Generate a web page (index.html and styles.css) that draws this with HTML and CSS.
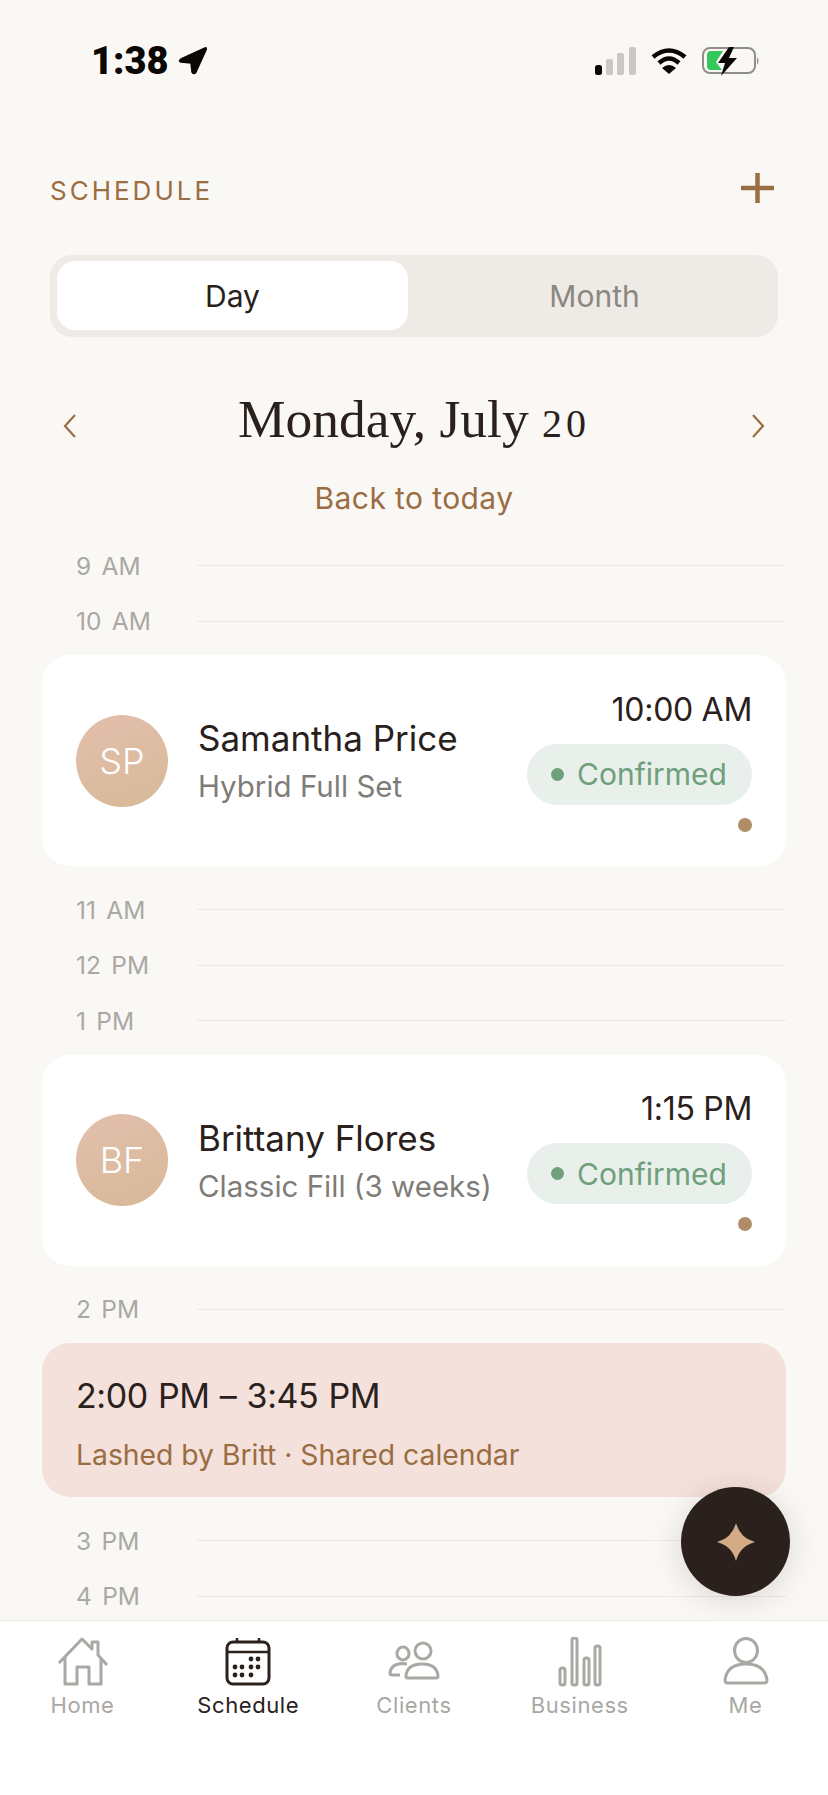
FILE: index.html
```html
<!DOCTYPE html>
<html>
<head>
<meta charset="utf-8">
<title>Schedule</title>
<link rel="stylesheet" href="styles.css">
</head>
<body>
<div class="phone">
	<div class="status">
		<div class="clock">1:38
			<svg class="arrow" width="30" height="30" viewBox="0 0 30 30"><path d="M27 2 L3 13 Q0 15 3 16 L13 17 L14 26 Q16 29 18 26 L28 4 Q29 1 27 2 Z" fill="#0a0705" stroke="#0a0705" stroke-width="1.5" stroke-linejoin="round"/></svg>
		</div>
		<div class="status-icons">
			<svg width="41" height="28" viewBox="0 0 41 28"><rect x="0" y="18" width="7" height="10" rx="2.5" fill="#0a0705"/><rect x="11" y="12" width="7" height="16" rx="2" fill="#c9c8c4"/><rect x="22" y="6" width="7" height="22" rx="2" fill="#c9c8c4"/><rect x="34" y="0" width="7" height="28" rx="2" fill="#c9c8c4"/></svg>
			<svg class="wifi" width="36" height="28" viewBox="0 0 36 28"><path d="M2 10 Q18 -3 34 10" fill="none" stroke="#0a0705" stroke-width="4.5"/><path d="M8 16 Q18 7 28 16" fill="none" stroke="#0a0705" stroke-width="4.5"/><path d="M11 21 L18 27 L25 21 Q18 15 11 21 Z" fill="#0a0705"/></svg>
			<svg class="batt" width="58" height="30" viewBox="0 0 58 30"><rect x="1" y="2" width="52" height="25" rx="7" fill="none" stroke="#8f8e8a" stroke-width="2"/><path d="M9 5 H21 L14 16 L20 24 H9 Q5 24 5 20 V9 Q5 5 9 5 Z" fill="#34c759"/><path d="M27 1 L16 17 H23 L19 30 L35 12 H27 L32 1 Z" fill="#0a0705"/><path d="M55 11 Q58 15 55 19 Z" fill="#8f8e8a"/></svg>
		</div>
	</div>

	<div class="top">
		<span class="eyebrow">SCHEDULE</span>
		<svg class="plus" width="33" height="30" viewBox="0 0 33 30"><path d="M16.5 0 V30 M0 15 H33" stroke="#9a6d42" stroke-width="4.5"/></svg>
	</div>

	<div class="tabs">
		<div class="tab on">Day</div>
		<div class="tab">Month</div>
	</div>

	<div class="date-row">
		<svg class="chev" width="15" height="24" viewBox="0 0 15 24"><path d="M13 1 L3 12 L13 23" fill="none" stroke="#9a6d42" stroke-width="2.2"/></svg>
		<h1>Monday, July <span class="num">20</span></h1>
		<svg class="chev" width="15" height="24" viewBox="0 0 15 24"><path d="M2 1 L12 12 L2 23" fill="none" stroke="#9a6d42" stroke-width="2.2"/></svg>
	</div>
	<div class="back">Back to today</div>

	<div class="agenda">
		<div class="hour"><span>9 AM</span><i></i></div>
		<div class="hour"><span>10 AM</span><i></i></div>
		<div class="card">
			<div class="avatar">SP</div>
			<div class="who">
				<div class="name">Samantha Price</div>
				<div class="service">Hybrid Full Set</div>
			</div>
			<div class="right">
				<div class="time">10:00 AM</div>
				<div class="pill"><b></b>Confirmed</div>
				<div class="dot"></div>
			</div>
		</div>
		<div class="hour first"><span>11 AM</span><i></i></div>
		<div class="hour"><span>12 PM</span><i></i></div>
		<div class="hour"><span>1 PM</span><i></i></div>
		<div class="card">
			<div class="avatar">BF</div>
			<div class="who">
				<div class="name">Brittany Flores</div>
				<div class="service">Classic Fill (3 weeks)</div>
			</div>
			<div class="right">
				<div class="time">1:15 PM</div>
				<div class="pill"><b></b>Confirmed</div>
				<div class="dot"></div>
			</div>
		</div>
		<div class="hour first"><span>2 PM</span><i></i></div>
		<div class="block">
			<div class="block-time">2:00 PM – 3:45 PM</div>
			<div class="block-note">Lashed by Britt · Shared calendar</div>
		</div>
		<div class="hour first"><span>3 PM</span><i></i></div>
		<div class="hour"><span>4 PM</span><i></i></div>
	</div>

	<div class="fab">
		<svg width="40" height="40" viewBox="0 0 40 40"><path d="M20 1 Q24 16 39 20 Q24 24 20 39 Q16 24 1 20 Q16 16 20 1 Z" fill="#d4ab86"/></svg>
	</div>

	<div class="nav">
		<div class="nav-item">
			<svg width="52" height="50" viewBox="0 0 52 50" fill="none" stroke="#a9a8a3" stroke-width="3" stroke-linejoin="round"><path d="M2 26 L25 2 L35 12 V5 H41 V18 L50 28 M8 20 V47 H20 V30 H32 V47 H44 V22"/></svg>
			<span>Home</span>
		</div>
		<div class="nav-item on">
			<svg width="48" height="50" viewBox="0 0 48 50"><g fill="none" stroke="#2a201c" stroke-width="3"><rect x="3" y="5" width="42" height="42" rx="6"/><path d="M3 15 H45" stroke-width="2.5"/><path d="M13 1 V6 M35 1 V6" stroke-width="2.5"/></g><g fill="#2a201c"><circle cx="27" cy="22" r="2.4"/><circle cx="34" cy="22" r="2.4"/><circle cx="11" cy="30" r="2.4"/><circle cx="18" cy="30" r="2.4"/><circle cx="27" cy="30" r="2.4"/><circle cx="34" cy="30" r="2.4"/><circle cx="11" cy="38" r="2.4"/><circle cx="18" cy="38" r="2.4"/><circle cx="27" cy="38" r="2.4"/></g></svg>
			<span>Schedule</span>
		</div>
		<div class="nav-item">
			<svg width="52" height="50" viewBox="0 0 52 50" fill="none" stroke="#a9a8a3" stroke-width="3"><ellipse cx="15" cy="16.5" rx="6" ry="6.5"/><ellipse cx="35" cy="14" rx="8" ry="8"/><path d="M19 27 L14 26.5 Q3 27 2 36 Q2 38 4 38 H12"/><path d="M18 39 Q19 27 34 27 Q49 27 50 39 Q50 41 48 41 H20 Q18 41 18 39 Z" stroke-linejoin="round"/></svg>
			<span>Clients</span>
		</div>
		<div class="nav-item">
			<svg width="44" height="50" viewBox="0 0 44 50" fill="none" stroke="#a9a8a3" stroke-width="3"><rect x="2" y="31" width="5" height="17" rx="2"/><rect x="14" y="1" width="5" height="47" rx="2"/><rect x="26" y="21" width="5" height="27" rx="2"/><rect x="37" y="9" width="5" height="39" rx="2"/></svg>
			<span>Business</span>
		</div>
		<div class="nav-item">
			<svg width="46" height="50" viewBox="0 0 46 50" fill="none" stroke="#a9a8a3" stroke-width="3"><ellipse cx="23" cy="13.5" rx="11.5" ry="12"/><path d="M2 43 Q4 27 23 27 Q42 27 44 43 Q44 46 41 46 H5 Q2 46 2 43 Z" stroke-linejoin="round"/></svg>
			<span>Me</span>
		</div>
	</div>
</div>
</body>
</html>
```

FILE: styles.css
```css
html, body {
	margin: 0;
	padding: 0;
}
body {
	background: #faf8f5;
	font-family: Inter, Lato, sans-serif;
	color: #2a201c;
}
.phone {
	width: 828px;
	height: 1795px;
	position: relative;
	overflow: hidden;
	display: flex;
	flex-direction: column;
}

.status {
	height: 62px;
	padding: 30px 68px 0 91px;
	display: flex;
	justify-content: space-between;
	align-items: center;
}
.clock {
	display: flex;
	align-items: center;
	gap: 10px;
	font: 900 38px Roboto, sans-serif;
	color: #0a0705;
}
.status-icons {
	display: flex;
	align-items: center;
	gap: 15px;
}

.top {
	margin-top: 81px;
	padding: 0 54px 0 50px;
	display: flex;
	justify-content: space-between;
	align-items: center;
}
.eyebrow {
	font-size: 26px;
	letter-spacing: 3px;
	color: #9a6d42;
}
.plus {
	margin-bottom: 4px;
}

.tabs {
	margin: 48px 50px 0;
	height: 82px;
	padding: 6px 7px 7px;
	box-sizing: border-box;
	border-radius: 22px;
	background: #eeebe6;
	display: flex;
}
.tab {
	flex: 1;
	padding-left: 10px;
	display: flex;
	align-items: center;
	justify-content: center;
	font-size: 30px;
	color: #8a8781;
	border-radius: 18px;
}
.tab.on {
	flex: 0 0 351px;
	padding-left: 0;
	background: #fff;
	color: #2a201c;
}

.date-row {
	margin-top: 51px;
	padding: 0 62px;
	display: flex;
	justify-content: space-between;
	align-items: center;
}
.chev {
	margin-top: 14px;
}
h1 {
	margin: 0;
	font: 400 53.5px "Liberation Serif", serif;
	color: #2a201c;
}
.num {
	font-size: 40px;
	letter-spacing: 4px;
}
.back {
	margin-top: 30px;
	text-align: center;
	font-size: 30px;
	letter-spacing: 0.4px;
	color: #9a6d42;
}

.agenda {
	margin-top: 22px;
	padding: 0 42px;
}
.hour {
	height: 55.5px;
	display: flex;
	align-items: center;
	color: #a9a8a3;
	font-size: 24.5px;
	word-spacing: 3.5px;
}
.hour.first {
	margin-top: 16px;
}
.hour span {
	width: 155px;
	padding-left: 34px;
	box-sizing: border-box;
}
.hour i {
	flex: 1;
	height: 1px;
	background: #ebe9e4;
}

.card {
	margin-top: 6px;
	height: 211px;
	box-sizing: border-box;
	padding: 0 34px;
	background: #fff;
	border-radius: 28px;
	display: flex;
	align-items: center;
}
.avatar {
	width: 92px;
	height: 92px;
	border-radius: 50%;
	background: linear-gradient(160deg, #e2bfad, #d8b998);
	color: #fff;
	font-size: 36px;
	font-weight: 300;
	display: flex;
	align-items: center;
	justify-content: center;
}
.who {
	flex: 1;
	margin-left: 30px;
}
.name {
	font-size: 35px;
	color: #2a201c;
}
.service {
	margin-top: 9px;
	font-size: 29.5px;
	color: #7f7c77;
}
.right {
	display: flex;
	flex-direction: column;
	align-items: flex-end;
}
.time {
	font-size: 32px;
	letter-spacing: -0.3px;
	color: #2a201c;
}
.pill {
	margin-top: 15px;
	width: 225px;
	height: 61px;
	padding-left: 24px;
	box-sizing: border-box;
	border-radius: 31px;
	background: #e9efea;
	color: #6fa07c;
	font-size: 30px;
	display: flex;
	align-items: center;
	gap: 13px;
}
.pill b {
	width: 13px;
	height: 13px;
	border-radius: 50%;
	background: #6fa07c;
}
.dot {
	margin-top: 13px;
	width: 14px;
	height: 14px;
	border-radius: 50%;
	background: #b08d67;
}

.block {
	margin-top: 6px;
	height: 154px;
	box-sizing: border-box;
	padding: 32px 34px 0;
	border-radius: 28px;
	background: #f4e1dc;
}
.block-time {
	font-size: 34px;
	letter-spacing: -0.4px;
	word-spacing: 1px;
	color: #2a201c;
}
.block-note {
	margin-top: 22px;
	font-size: 28.3px;
	color: #9a6d42;
}

.fab {
	position: absolute;
	left: 681px;
	top: 1487px;
	width: 109px;
	height: 109px;
	border-radius: 50%;
	background: #2a201c;
	box-shadow: 0 4px 30px rgba(42, 32, 28, 0.16);
	display: flex;
	align-items: center;
	justify-content: center;
}

.nav {
	position: absolute;
	left: 0;
	right: 0;
	bottom: 0;
	top: 1620px;
	box-sizing: border-box;
	padding: 16px 25px 0;
	background: #fff;
	border-top: 1px solid #eceae6;
	display: flex;
	justify-content: space-between;
	align-items: flex-start;
}
.nav-item {
	width: 115px;
	display: flex;
	flex-direction: column;
	align-items: center;
	gap: 5px;
	font-size: 22px;
	letter-spacing: 0.6px;
	color: #a9a8a3;
}
.nav-item.on {
	color: #2a201c;
}
```
